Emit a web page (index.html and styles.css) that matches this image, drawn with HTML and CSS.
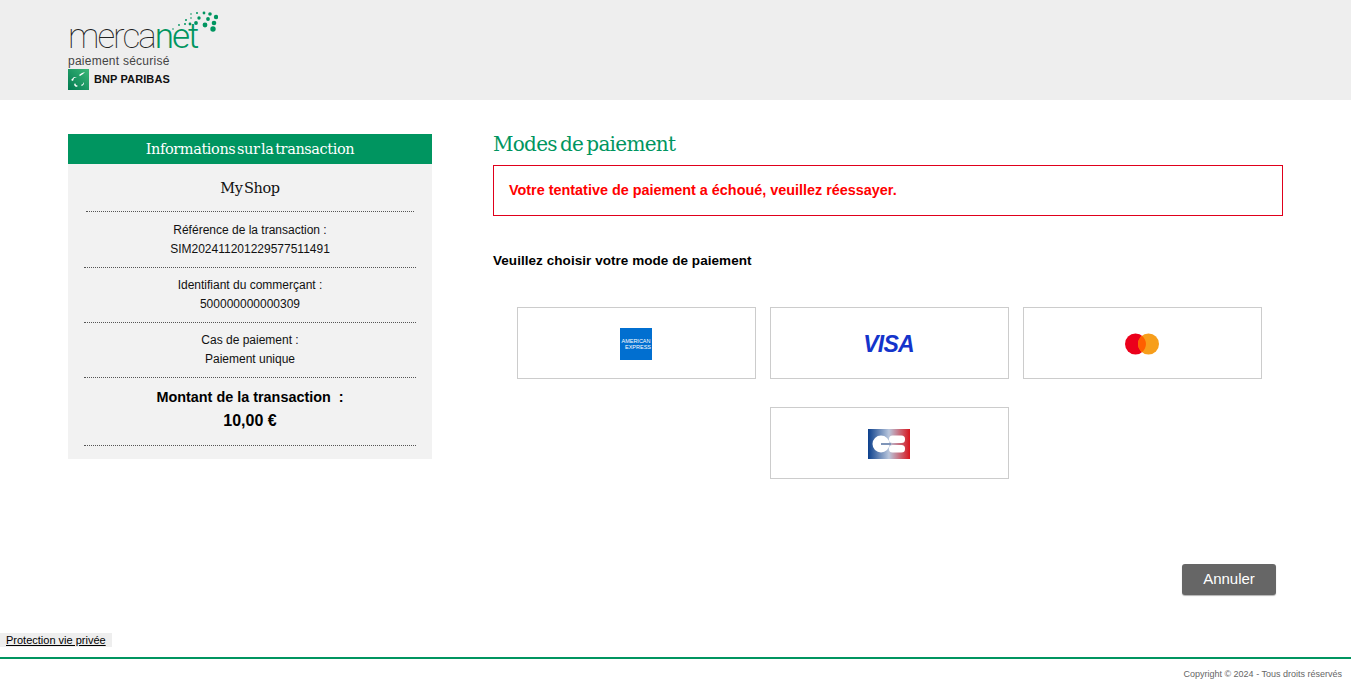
FILE: index.html
```html
<!DOCTYPE html>
<html lang="fr">

<head>
    <meta charset="UTF-8">
    <title>Mercanet - Modes de paiement</title>
    <link rel="stylesheet" href="styles.css">
</head>

<body>
    <div class="header">
        <div class="logo">
            <svg class="logo-dots" width="60" height="30" viewBox="0 0 60 30" fill="#009560">
                <circle cx="55" cy="19" r="2.7" />
                <circle cx="58" cy="7" r="2.2" />
                <circle cx="52" cy="4" r="1.8" />
                <circle cx="46" cy="3" r="1.4" />
                <circle cx="39" cy="3" r="1" />
                <circle cx="33" cy="4" r=".8" />
                <circle cx="56" cy="13" r="2.3" />
                <circle cx="50" cy="9" r="1.9" />
                <circle cx="41" cy="8" r="1.7" />
                <circle cx="47" cy="15" r="2.4" />
                <circle cx="38" cy="13" r="1.9" />
                <circle cx="32" cy="14" r="1.4" />
                <circle cx="28" cy="10" r="1" />
                <circle cx="33" cy="8" r=".8" />
                <circle cx="27" cy="14" r="1" />
                <circle cx="21" cy="15" r=".9" />
                <circle cx="15" cy="19" r=".8" />
            </svg>
            <div class="logo-name">merca<span class="logo-net">net</span></div>
            <div class="logo-sub">paiement sécurisé</div>
            <div class="logo-bank">
                <svg width="21" height="21" viewBox="0 0 21 21">
                    <defs>
                        <linearGradient id="bnp" x1="0" y1="1" x2="1" y2="0">
                            <stop offset="0" stop-color="#007a50" />
                            <stop offset="1" stop-color="#3cb878" />
                        </linearGradient>
                    </defs>
                    <rect width="21" height="21" fill="url(#bnp)" />
                    <path d="M3 11l3-3 3 0-3 1-1 3zM11 6l3-2 3-1-2 2-3 2zM6 16l2 2 2-1-2-1-1-2zM14 17l2-2 0-2-1 2-2 1z" fill="#fff" />
                </svg>
                <span class="logo-bank-name">BNP PARIBAS</span>
            </div>
        </div>
    </div>

    <div class="main">
        <div class="transaction">
            <h2 class="transaction-title">Informations sur la transaction</h2>
            <div class="transaction-body">
                <div class="shop-name">My Shop</div>
                <div class="info-block info-first">
                    <div>Référence de la transaction :</div>
                    <div>SIM202411201229577511491</div>
                </div>
                <div class="info-block">
                    <div>Identifiant du commerçant :</div>
                    <div>500000000000309</div>
                </div>
                <div class="info-block">
                    <div>Cas de paiement :</div>
                    <div>Paiement unique</div>
                </div>
                <div class="amount">
                    <div>Montant de la transaction &nbsp;:</div>
                    <div class="amount-value">10,00 €</div>
                </div>
            </div>
        </div>

        <div class="payment">
            <h1 class="payment-title">Modes de paiement</h1>
            <div class="error-box">Votre tentative de paiement a échoué, veuillez réessayer.</div>
            <p class="choose">Veuillez choisir votre mode de paiement</p>

            <div class="card-list">
                <a class="card-btn" href="#">
                    <svg width="32" height="32" viewBox="0 0 32 32">
                        <rect width="32" height="32" fill="#016fd0" />
                        <text x="16" y="15" class="amex-text" text-anchor="middle">AMERICAN</text>
                        <text x="31" y="21" class="amex-text" text-anchor="end">EXPRESS</text>
                    </svg>
                </a>
                <a class="card-btn" href="#">
                    <span class="visa">VISA</span>
                </a>
                <a class="card-btn" href="#">
                    <svg width="36" height="24" viewBox="0 0 36 24">
                        <circle cx="11.5" cy="12" r="10.5" fill="#eb001b" />
                        <circle cx="24.5" cy="12" r="10.5" fill="#f79e1b" />
                        <path d="M18 3.8a10.500 10.500 0 0 1 0 16.400a10.500 10.500 0 0 1 0-16.400z" fill="#ff5f00" />
                    </svg>
                </a>
                <a class="card-btn" href="#">
                    <svg width="42" height="30" viewBox="0 0 42 30">
                        <defs>
                            <linearGradient id="cb" x1="0" y1="0" x2="1" y2="0">
                                <stop offset="0" stop-color="#0b3f8c" />
                                <stop offset=".5" stop-color="#b9c6dc" />
                                <stop offset="1" stop-color="#d8141c" />
                            </linearGradient>
                        </defs>
                        <rect width="42" height="30" fill="url(#cb)" />
                        <circle cx="13" cy="15" r="8.500" fill="#fff" />
                        <rect x="13" y="14" width="10" height="2" fill="#7f95b8" />
                        <rect x="21" y="6.500" width="16" height="7.500" rx="3.500" fill="#fff" />
                        <rect x="21" y="16" width="16" height="7.500" rx="3.500" fill="#fff" />
                    </svg>
                </a>
            </div>

            <div class="actions">
                <button class="cancel-btn" type="button">Annuler</button>
            </div>
        </div>
    </div>

    <div class="privacy-row">
        <a class="privacy-link" href="#">Protection vie privée</a>
    </div>
    <div class="footer">Copyright © 2024 - Tous droits réservés</div>
</body>

</html>
```

FILE: styles.css
```css
html,
body {
    margin: 0;
    padding: 0;
}

body {
    height: 679px;
    overflow: hidden;
    background-color: #fff;
    color: #000;
    font-family: "Liberation Sans", Arial, sans-serif;
}

.header {
    height: 100px;
    padding-left: 68px;
    background-color: #eee;
}

.logo {
    position: relative;
    width: 160px;
    padding-top: 18px;
}

.logo-dots {
    position: absolute;
    top: 10px;
    left: 90px;
}

.logo-name {
    height: 36px;
    font-family: "Roboto", sans-serif;
    font-size: 35px;
    font-weight: 100;
    line-height: 38px;
    letter-spacing: -2px;
    color: #222;
}

.logo-net {
    font-weight: 300;
    color: #009560;
}

.logo-sub {
    height: 15px;
    font-size: 12px;
    line-height: 15px;
    letter-spacing: .25px;
    color: #444;
}

.logo-bank {
    display: flex;
    align-items: center;
    gap: 5px;
}

.logo-bank-name {
    padding-bottom: 2px;
    font-size: 11px;
    font-weight: bold;
    letter-spacing: .1px;
    color: #111;
}

.main {
    display: flex;
    height: 563px;
    padding-left: 68px;
}

.transaction {
    width: 364px;
    margin-top: 34px;
}

.transaction-title {
    height: 30px;
    margin: 0;
    background-color: #009560;
    color: #fff;
    font-family: "DejaVu Serif", serif;
    font-size: 14.5px;
    font-weight: normal;
    line-height: 30px;
    letter-spacing: -.4px;
    word-spacing: -2.6px;
    text-align: center;
}

.transaction-body {
    height: 295px;
    box-sizing: border-box;
    padding: 0 16px;
    background-color: #f2f2f2;
    color: #111;
    font-size: 12px;
    line-height: 19px;
    text-align: center;
}

.shop-name {
    height: 48px;
    margin: 0 2px;
    box-sizing: border-box;
    padding-top: 15px;
    border-bottom: 1px dotted #555;
    font-family: "DejaVu Serif", serif;
    font-size: 14.5px;
    line-height: 19px;
    letter-spacing: -.4px;
    word-spacing: -2.6px;
}

.info-block {
    height: 55px;
    box-sizing: border-box;
    padding-top: 8px;
    border-bottom: 1px dotted #555;
}

.info-first {
    height: 56px;
    padding-top: 9px;
}

.amount {
    height: 68px;
    box-sizing: border-box;
    padding-top: 7px;
    border-bottom: 1px dotted #555;
    font-size: 14.4px;
    font-weight: bold;
    line-height: 24px;
    color: #000;
}

.amount-value {
    font-size: 16px;
}

.payment {
    width: 790px;
    margin-left: 61px;
}

.payment-title {
    height: 65px;
    margin: 0;
    box-sizing: border-box;
    padding-top: 30px;
    font-family: "DejaVu Serif", serif;
    font-size: 20px;
    font-weight: normal;
    line-height: 28px;
    letter-spacing: -.7px;
    word-spacing: -2.6px;
    color: #009560;
}

.error-box {
    height: 51px;
    box-sizing: border-box;
    padding-left: 15px;
    border: 1px solid #e0001b;
    color: #f00;
    font-size: 14.4px;
    font-weight: bold;
    line-height: 48px;
}

.choose {
    margin: 37px 0 0;
    font-size: 13.5px;
    font-weight: bold;
    line-height: 16px;
    letter-spacing: .05px;
}

.card-list {
    display: flex;
    flex-wrap: wrap;
    justify-content: center;
    gap: 28px 14px;
    width: 745px;
    margin: 38px 0 0 24px;
}

.card-btn {
    display: flex;
    align-items: center;
    justify-content: center;
    width: 239px;
    height: 72px;
    box-sizing: border-box;
    padding: 2px 2px 0 0;
    border: 1px solid #ccc;
    background-color: #fff;
    text-decoration: none;
}

.amex-text {
    font-family: "Liberation Sans", sans-serif;
    font-size: 5.5px;
    fill: #fff;
}

.visa {
    font-size: 23px;
    font-style: italic;
    font-weight: bold;
    letter-spacing: -.8px;
    color: #1434cb;
}

.actions {
    display: flex;
    justify-content: flex-end;
    margin: 85px 7px 0 0;
}

.cancel-btn {
    width: 94px;
    height: 31px;
    padding: 0 0 3px;
    border: none;
    border-radius: 3px;
    box-shadow: 0 1px 1px rgba(0, 0, 0, 0.3);
    background-color: #666;
    color: #fff;
    font-family: "Liberation Sans", sans-serif;
    font-size: 15px;
}

.privacy-row {
    height: 27px;
    margin-top: -33px;
    position: relative;
}

.privacy-link {
    display: inline-block;
    padding: 0 6px;
    background-color: #eee;
    color: #000;
    font-size: 11px;
    line-height: 14px;
}

.footer {
    height: 19px;
    padding-right: 9px;
    border-top: 2px solid #009560;
    color: #666;
    font-size: 9px;
    line-height: 31px;
    text-align: right;
}
```
